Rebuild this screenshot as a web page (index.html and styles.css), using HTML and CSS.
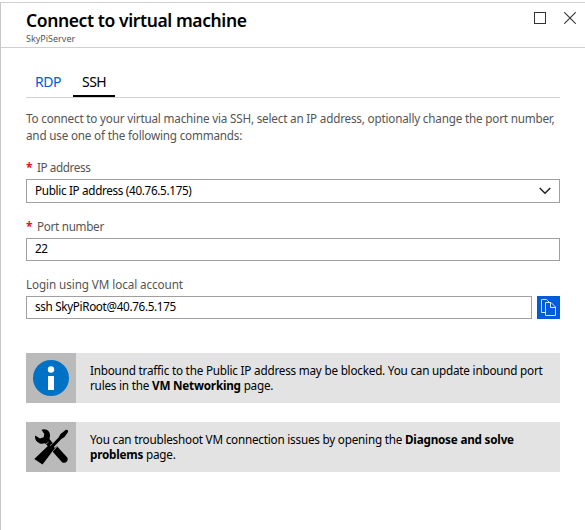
FILE: index.html
```html
<!DOCTYPE html>
<html lang="en">
<head>
<meta charset="utf-8">
<title>Connect to virtual machine</title>
<link rel="stylesheet" href="styles.css">
</head>
<body>
<section class="blade">
  <header class="header">
    <div>
      <h1 class="title">Connect to virtual machine</h1>
      <p class="subtitle">SkyPiServer</p>
    </div>
    <div class="window-actions">
      <svg width="12" height="12" viewBox="0 0 12 12"><rect x=".5" y=".5" width="11" height="11" fill="none" stroke="#333"/></svg>
      <svg width="12" height="12" viewBox="0 0 12 12"><path d="M.3.3l11.4 11.4M11.7.3L.3 11.7" fill="none" stroke="#333" stroke-width="1.1"/></svg>
    </div>
  </header>
  <main class="content">
    <nav class="tabs">
      <a class="tab">RDP</a>
      <a class="tab tab-active">SSH</a>
    </nav>
    <p class="intro">To connect to your virtual machine via SSH, select an IP address, optionally change the port number,<br>and use one of the following commands:</p>
    <div class="field">
      <div class="label"><span class="required">*</span><span class="label-ip">IP address</span></div>
      <div class="box select"><span class="value-ip">Public IP address (40.76.5.175)</span>
        <svg width="12" height="8" viewBox="0 0 12 8"><path d="M.7 1l5.3 5.3L11.3 1" fill="none" stroke="#222" stroke-width="1.5"/></svg>
      </div>
    </div>
    <div class="field">
      <div class="label"><span class="required">*</span><span class="label-port">Port number</span></div>
      <div class="box"><span class="value-port">22</span></div>
    </div>
    <div class="field field-login">
      <div class="label"><span class="label-login">Login using VM local account</span></div>
      <div class="copy-row">
        <div class="box"><span class="value-ssh">ssh SkyPiRoot@40.76.5.175</span></div>
        <div class="copy">
          <svg width="23" height="23" viewBox="0 0 23 23"><g fill="#015cda" stroke="#d5e6fb" stroke-width="1"><path d="M4.500 3.500h5l4 4v9h-9z"/><path d="M8.500 6.500h5.500l4.500 4.500v8.500h-10z"/><path d="M13.500 6.500v5h5" fill="none"/></g></svg>
        </div>
      </div>
    </div>
    <div class="notice">
      <div class="notice-icon">
        <svg width="50" height="50" viewBox="0 0 50 50"><circle cx="25" cy="25" r="18" fill="#0072c6"/><circle cx="25" cy="16.500" r="3.200" fill="#fff"/><path d="M22 23h6v14h-6z" fill="#fff"/></svg>
      </div>
      <p class="notice-text">Inbound traffic to the Public IP address may be blocked. You can update inbound port<br>rules in the <b>VM Networking</b> page.</p>
    </div>
    <div class="notice">
      <div class="notice-icon">
        <svg width="50" height="50" viewBox="0 0 50 50">
          <path d="M15.500 7.800c5-2 9 1.700 8.500 6.200l-.5 3 3.300 4.300-4.600 3.200-3.200-3.200c-5 1.800-10-1.800-10-6.600l.3-1.200 4.600 2.900 3.800-1.100.6-3.400z"/>
          <path d="M27.300 27.600l3.700-3.400 9.800 10.800c2.900 3.200-1.800 7.800-5 5L26.800 29.800z"/>
          <path d="M41.800 8l.2 2-3.500 5-3.200 2-7.300 7.800.8 1.400-12.300 16.300L8.300 37l14.100-13.400 2 .3 8.400-8.600 1.500-3 5.500-4.500z"/>
          <path d="M21.700 23.200l1.200-1 5 4.800-1 1.300z"/>
          <path d="M19.500 22.600l3-2.500M26.600 29.300l4.200-4.100" fill="none" stroke="#bababa" stroke-width=".7"/>
        </svg>
      </div>
      <p class="notice-text">You can troubleshoot VM connection issues by opening the <b>Diagnose and solve</b><br><b>problems</b> page.</p>
    </div>
  </main>
</section>
</body>
</html>
```
FILE: styles.css
```css
* { box-sizing: border-box; }
body {
  margin: 0;
  padding-top: 2px;
  height: 530px;
  overflow: hidden;
  background: #fff;
  font-family: "Noto Sans", "Open Sans", sans-serif;
  font-size: 11.7px;
  color: #000;
}
h1, p { margin: 0; font-weight: normal; }
p, span { white-space: nowrap; }
svg { display: block; flex: none; }
.blade { height: 528px; border-top: 1px solid #d0d0d0; border-left: 1px solid #c8c8c8; }
.header {
  display: flex;
  justify-content: space-between;
  height: 45px;
  padding: 4px 9px 0 25px;
  border-bottom: 1px solid #d0d0d0;
}
.title { font-size: 17.5px; line-height: 26px; font-weight: 600; letter-spacing: -0.4px; }
.subtitle { font-size: 9px; line-height: 11px; color: #555; }
.window-actions { display: flex; gap: 18px; padding-top: 5px; }
.content { padding: 21px 25px 0; }
.tabs { display: flex; height: 29px; border-bottom: 1px solid #d0d0d0; }
.tab { height: 28px; padding: 0 9px; font-size: 14px; line-height: 26px; letter-spacing: -0.5px; color: #015cda; width: 47px; }
.tab-active { width: 42px; color: #000; border-bottom: 2px solid #000; }
.intro { margin-top: 12px; line-height: 17px; color: #555; letter-spacing: -0.19px; }
.field { margin-top: 15px; }
.label { display: flex; height: 20px; line-height: 17px; color: #555; }
.required { width: 11px; color: #e81123; font-size: 12px; font-weight: 700; line-height: 18px; }
.label-ip { letter-spacing: -0.4px; }
.label-port { letter-spacing: -0.3px; }
.label-login { letter-spacing: -0.09px; }
.value-ip { letter-spacing: -0.32px; }
.value-port { letter-spacing: -0.5px; }
.value-ssh { letter-spacing: -0.33px; }
.box {
  display: flex;
  align-items: center;
  justify-content: space-between;
  flex: 1;
  height: 23px;
  padding: 0 8px 2px;
  border: 1px solid #a0a0a0;
  line-height: 17px;
}
.select { height: 24px; padding-bottom: 1px; }
.copy-row { display: flex; gap: 5px; }
.copy { width: 23px; height: 23px; background: #015cda; }
.notice { display: flex; height: 50px; margin-top: 19px; background: #e3e3e3; }
.field-login + .notice { margin-top: 34px; }
.notice-icon { width: 50px; background: #bababa; }
.notice-text { padding: 10px 0 0 14px; line-height: 15px; letter-spacing: -0.205px; }
```
